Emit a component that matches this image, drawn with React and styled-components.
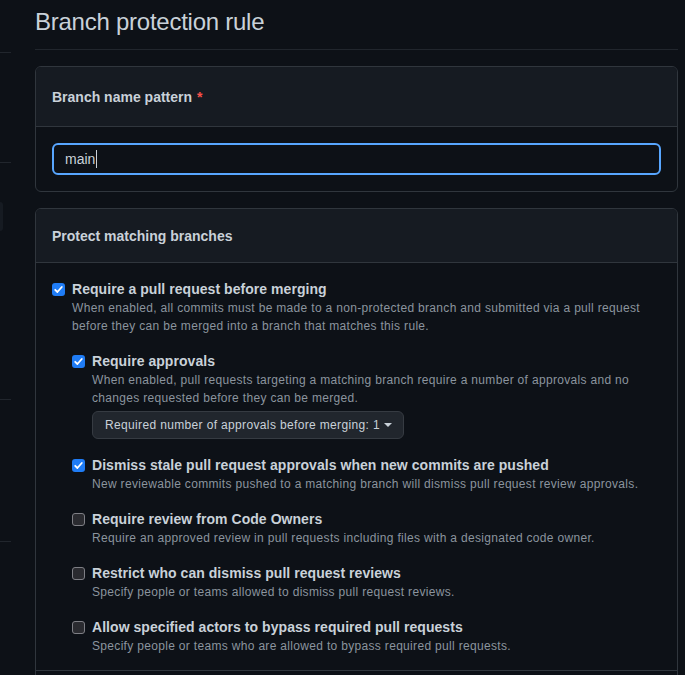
import React from "react";
import styled, { createGlobalStyle } from "styled-components";

const GlobalStyle = createGlobalStyle`
  html, body {
    margin: 0;
    padding: 0;
    background: #0d1117;
  }
  body {
    font-family: "Liberation Sans", Arial, sans-serif;
    color: #c9d1d9;
    -webkit-font-smoothing: antialiased;
  }
  * { box-sizing: border-box; }
`;

const Page = styled.div`
  display: flex;
  align-items: flex-start;
  min-height: 675px;
`;

const Sidebar = styled.nav`
  width: 11px;
  flex-shrink: 0;
  display: flex;
  flex-direction: column;
`;

const SideDivider = styled.div`
  height: 1px;
  background: #21262d;
  margin-top: ${(p) => p.$gap}px;
`;

const SideItem = styled.div`
  width: 3px;
  height: 29px;
  margin-top: ${(p) => p.$gap}px;
  background: #161b22;
  border-radius: 0 6px 6px 0;
`;

const Main = styled.main`
  margin-left: 24px;
  width: 643px;
  flex-shrink: 0;
`;

const TitleBar = styled.div`
  padding: 7px 0 12px;
  border-bottom: 1px solid #21262d;
  margin-bottom: 16px;
`;

const Title = styled.h1`
  margin: 0;
  font-size: 24px;
  line-height: 30px;
  font-weight: 400;
  letter-spacing: -0.25px;
  color: #c9d1d9;
`;

const Card = styled.section`
  border: 1px solid #30363d;
  border-radius: 6px;
  background: #0d1117;
  margin-bottom: 16px;
  overflow: hidden;
`;

const CardHeader = styled.div`
  height: ${(p) => p.$height}px;
  display: flex;
  align-items: center;
  padding: 0 16px;
  background: #161b22;
  border-bottom: 1px solid #30363d;
`;

const CardTitle = styled.h2`
  margin: 0;
  font-size: 14px;
  line-height: 20px;
  font-weight: 700;
  color: #c9d1d9;
`;

const Required = styled.span`
  color: #f85149;
  margin-left: 5px;
`;

const CardBody = styled.div`
  padding: 16px 16px ${(p) => p.$bottom ?? 16}px;
  border-top: ${(p) => (p.$divided ? "1px solid #30363d" : "none")};
`;

const TextField = styled.div`
  height: 32px;
  display: flex;
  align-items: center;
  padding: 0 11px;
  border: 2px solid #58a6ff;
  border-radius: 6px;
  background: #0d1117;
  font-size: 14px;
  color: #c9d1d9;
`;

const Caret = styled.span`
  display: inline-block;
  width: 1px;
  height: 18px;
  margin-left: 1px;
  background: #c9d1d9;
`;

const Item = styled.div`
  & + & {
    margin-top: 16px;
  }
`;

const Row = styled.label`
  display: flex;
  align-items: center;
  gap: 7px;
  height: 20px;
`;

const Box = styled.span`
  width: 13px;
  height: 13px;
  flex-shrink: 0;
  border-radius: 3px;
  display: flex;
  align-items: center;
  justify-content: center;
  background: ${(p) => (p.$checked ? "#1f7cf5" : "#2a2b30")};
  border: ${(p) => (p.$checked ? "none" : "1.5px solid #7e7f85")};
`;

const Label = styled.span`
  font-size: 14px;
  font-weight: 700;
  color: #c9d1d9;
  line-height: 20px;
  letter-spacing: 0.05px;
`;

const Indent = styled.div`
  padding-left: 20px;
`;

const Note = styled.p`
  margin: 0;
  font-size: 12px;
  line-height: 18px;
  letter-spacing: 0.32px;
  color: #8b949e;
`;

const Nested = styled.div`
  margin-top: 16px;
`;

const SelectButton = styled.button`
  margin-top: 4px;
  height: 28px;
  display: inline-flex;
  align-items: center;
  gap: 4px;
  padding: 0 11px 0 12px;
  background: #21262d;
  border: 1px solid #363b42;
  border-radius: 6px;
  font-family: inherit;
  font-size: 12px;
  letter-spacing: 0.35px;
  color: #c9d1d9;
`;

const DropCaret = styled.span`
  width: 0;
  height: 0;
  border-left: 4px solid transparent;
  border-right: 4px solid transparent;
  border-top: 4px solid #c9d1d9;
`;

const Spacer = styled.div`
  height: 40px;
`;

function Check({ checked }) {
  return (
    <Box $checked={checked}>
      {checked && (
        <svg width="11" height="11" viewBox="0 0 11 11">
          <path
            d="M2.2 5.8 L4.4 8 L8.8 3"
            fill="none"
            stroke="#fff"
            strokeWidth="1.8"
            strokeLinecap="round"
            strokeLinejoin="round"
          />
        </svg>
      )}
    </Box>
  );
}

function Option({ checked, label, note, children }) {
  return (
    <Item>
      <Row>
        <Check checked={checked} />
        <Label>{label}</Label>
      </Row>
      <Indent>
        <Note>{note}</Note>
        {children}
      </Indent>
    </Item>
  );
}

export default function App() {
  return (
    <>
      <GlobalStyle />
      <Page>
        <Sidebar>
          <SideDivider $gap={52} />
          <SideDivider $gap={109} />
          <SideItem $gap={39} />
          <SideDivider $gap={168} />
          <SideDivider $gap={141} />
        </Sidebar>
        <Main>
          <TitleBar>
            <Title>Branch protection rule</Title>
          </TitleBar>

          <Card>
            <CardHeader $height={60}>
              <CardTitle>
                Branch name pattern<Required>*</Required>
              </CardTitle>
            </CardHeader>
            <CardBody>
              <TextField role="textbox">
                main
                <Caret />
              </TextField>
            </CardBody>
          </Card>

          <Card>
            <CardHeader $height={54}>
              <CardTitle>Protect matching branches</CardTitle>
            </CardHeader>
            <CardBody $bottom={15}>
              <Option
                checked
                label="Require a pull request before merging"
                note="When enabled, all commits must be made to a non-protected branch and submitted via a pull request before they can be merged into a branch that matches this rule."
              >
                <Nested>
                  <Option
                    checked
                    label="Require approvals"
                    note="When enabled, pull requests targeting a matching branch require a number of approvals and no changes requested before they can be merged."
                  >
                    <SelectButton type="button">
                      Required number of approvals before merging: 1
                      <DropCaret />
                    </SelectButton>
                  </Option>
                  <Option
                    checked
                    label="Dismiss stale pull request approvals when new commits are pushed"
                    note="New reviewable commits pushed to a matching branch will dismiss pull request review approvals."
                  />
                  <Option
                    label="Require review from Code Owners"
                    note="Require an approved review in pull requests including files with a designated code owner."
                  />
                  <Option
                    label="Restrict who can dismiss pull request reviews"
                    note="Specify people or teams allowed to dismiss pull request reviews."
                  />
                  <Option
                    label="Allow specified actors to bypass required pull requests"
                    note="Specify people or teams who are allowed to bypass required pull requests."
                  />
                </Nested>
              </Option>
            </CardBody>
            <CardBody $divided>
              <Spacer />
            </CardBody>
          </Card>
        </Main>
      </Page>
    </>
  );
}
